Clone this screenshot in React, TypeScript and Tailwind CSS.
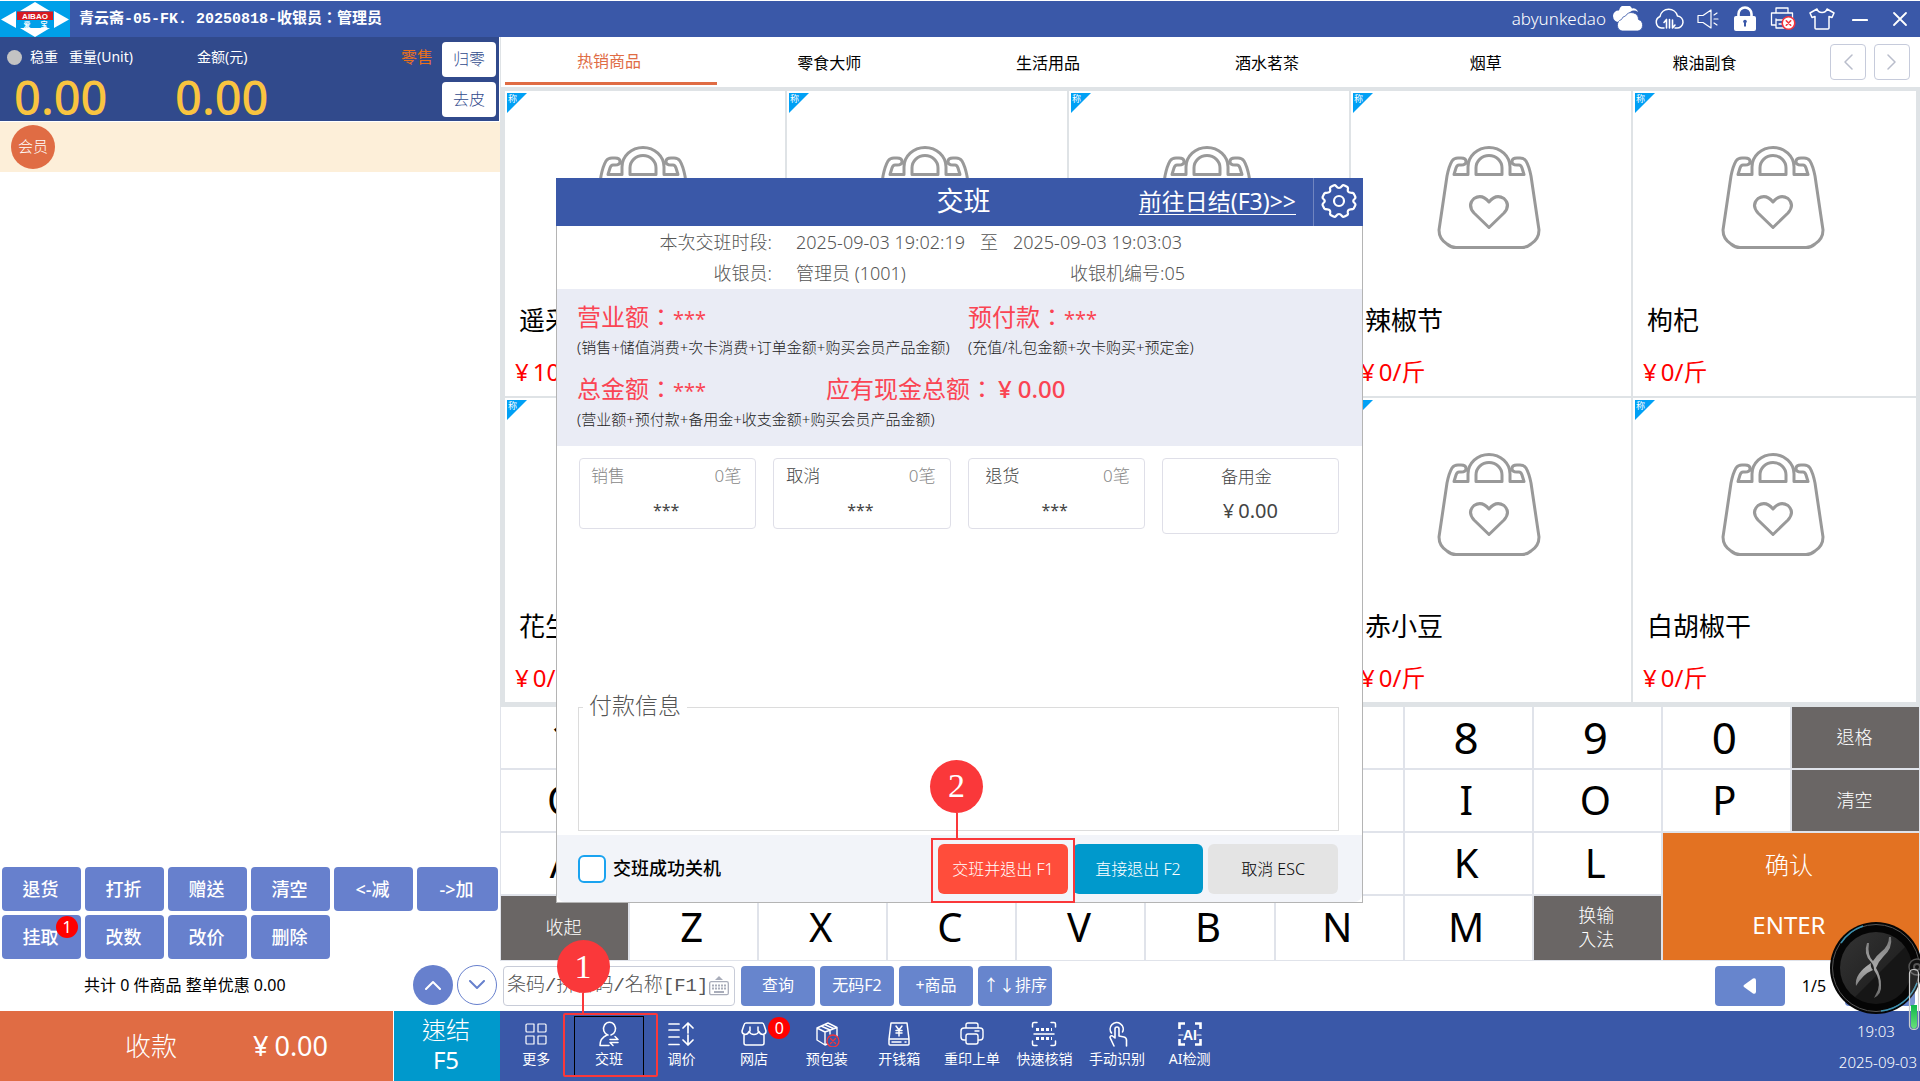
import React from "react";

const products = [
  { name: "遥采", price: "10" },
  { name: "", price: "" },
  { name: "", price: "" },
  { name: "辣椒节", price: "0/斤" },
  { name: "枸杞", price: "0/斤" },
  { name: "花生", price: "0/斤" },
  { name: "", price: "" },
  { name: "", price: "" },
  { name: "赤小豆", price: "0/斤" },
  { name: "白胡椒干", price: "0/斤" },
];

const tabs = ["热销商品", "零食大师", "生活用品", "酒水茗茶", "烟草", "粮油副食"];

function Logo() {
  return (
    <svg width="70" height="36" viewBox="0 0 70 36" className="shrink-0 bg-[#00a0e9]" role="img" aria-label="AIBAO">
      <path d="M35 1 50 10H20zM35 36 20 27H50zM1 18.500 16 10V27zM69 18.500 54 10V27z" fill="#fff" />
      <rect x="17" y="10.500" width="36" height="8.500" fill="#d71920" />
      <text x="35" y="17.500" textAnchor="middle" fontSize="8" fontWeight="700" fill="#fff" fontFamily="Liberation Sans">AIBAO</text>
      <text x="27" y="26" textAnchor="middle" fontSize="7" fontWeight="700" fill="#fff" fontFamily="Noto Sans CJK SC">爱</text>
      <text x="44" y="26" textAnchor="middle" fontSize="7" fontWeight="700" fill="#fff" fontFamily="Noto Sans CJK SC">宝</text>
    </svg>
  );
}

function IconButton({ label, w, children }: { label: string; w: string; children: React.ReactNode }) {
  return (
    <button aria-label={label} className={`flex h-9 items-center justify-center ${w}`}>
      {children}
    </button>
  );
}

const line = { fill: "none", stroke: "#fff", strokeWidth: 1.5, strokeLinecap: "round", strokeLinejoin: "round" } as const;

function TitleBar() {
  return (
    <header className="mt-px flex h-9 items-center bg-[#3a58a8] text-white">
      <Logo />
      <h1 className="ml-[9px] pt-0.5 font-['Liberation_Mono','Noto_Sans_CJK_SC',monospace] text-[15px] font-bold">
        青云斋-05-FK. 20250818-收银员：管理员
      </h1>
      <div className="ml-auto flex items-center">
        <span className="text-[17px] font-light">abyunkedao</span>
        <IconButton label="云端" w="w-11">
          <svg width="32" height="26" viewBox="0 0 32 26" fill="#fff">
            <path d="M8 17a6 6 0 0 1-7-6 5.500 5.500 0 0 1 6-5.500A7 7 0 0 1 20 3.500 5 5 0 0 1 25 5l1 2a7 7 0 0 0-8 0L8 17z" transform="translate(0 -1)" />
            <path d="M10 25a6 6 0 0 1-.5-11.500 5 5 0 0 1 4-3.500 7 7 0 0 1 13 3.500A6 6 0 0 1 26 25z" stroke="#3a58a8" strokeWidth=".8" />
          </svg>
        </IconButton>
        <IconButton label="同步" w="w-[38px]">
          <svg width="30" height="22" viewBox="0 0 30 22" {...line}>
            <path d="M10 20H7.500A6 6 0 0 1 6 8.500 9 9 0 0 1 23.500 8 6 6 0 0 1 22.500 20H21" />
            <path d="M12.500 11.500V20M12.500 11.500l-2.500 3M15.500 11.500V20M18.500 12v8l2.500-3" strokeWidth="1.600" />
          </svg>
        </IconButton>
        <IconButton label="声音" w="w-10">
          <svg width="22" height="20" viewBox="0 0 22 20" {...line} strokeWidth={1.2}>
            <path d="M1 6.500h5L14 1v18l-8-5.500H1zM17 10h4M17 6l3-2M17 14l3 2" />
          </svg>
        </IconButton>
        <IconButton label="锁定" w="w-[34px]">
          <svg width="24" height="26" viewBox="0 0 24 26">
            <rect x="1" y="10" width="22" height="15" rx="2" fill="#fff" />
            <path d="M5.500 11V8a6.500 6.500 0 0 1 13 0v3" fill="none" stroke="#fff" strokeWidth="2.600" />
            <path d="M12 20.500v-4" stroke="#3a58a8" strokeWidth="2" />
            <circle cx="12" cy="15.500" r="1.800" fill="#3a58a8" />
          </svg>
        </IconButton>
        <IconButton label="打印机" w="w-[42px]">
          <svg width="26" height="24" viewBox="0 0 26 24" {...line} strokeWidth={1.3}>
            <path d="M6 6V1h12v5M5 18H1.500V6h21v6M6 12v9h8M6 13h9M9 17h4" />
            <circle cx="18.500" cy="16" r="6.300" fill="#fff" stroke="#f4343c" strokeWidth="1.600" />
            <path d="m16.300 13.800 4.400 4.400M20.700 13.800l-4.400 4.400" stroke="#f4343c" strokeWidth="1.600" />
          </svg>
        </IconButton>
        <IconButton label="换肤" w="w-9">
          <svg width="26" height="22" viewBox="0 0 26 22" {...line}>
            <path d="M8 1 1 5l2 4.500 3-1V20q0 1 1 1h12q1 0 1-1V8.500l3 1L25 5l-7-4q-1 3.500-5 3.500T8 1z" />
          </svg>
        </IconButton>
        <IconButton label="最小化" w="w-10">
          <svg width="16" height="16" viewBox="0 0 16 16" {...line} strokeWidth={2.2}><path d="M1 9h14" /></svg>
        </IconButton>
        <IconButton label="关闭" w="w-10">
          <svg width="16" height="16" viewBox="0 0 16 16" {...line} strokeWidth={1.8}><path d="m2 2 12 12M14 2 2 14" /></svg>
        </IconButton>
      </div>
    </header>
  );
}

function ActionButton({ children, badge }: { children: React.ReactNode; badge?: string }) {
  return (
    <button className="relative h-11 rounded bg-[#6780cd] pr-0.5 text-[18px] font-medium text-white">
      {children}
      {badge && (
        <span className="absolute top-px right-[3px] flex size-[22px] items-center justify-center rounded-full bg-[#ff0000] text-base leading-none font-normal">
          {badge}
        </span>
      )}
    </button>
  );
}

function LeftPanel() {
  return (
    <section className="flex w-[500px] shrink-0 flex-col">
      <div className="mr-px flex h-[84px] bg-[#314a8c] text-white">
        <div className="flex-1 pt-2 pl-[7px]">
          <div className="flex h-6 items-center text-sm">
            <span className="size-[15px] rounded-full bg-[#c3c3c3]" />
            <span className="ml-2">稳重</span>
            <span className="ml-[11px] w-32">重量(Unit)</span>
            <span>金额(元)</span>
            <span className="mr-[9px] ml-auto text-base text-[#e8701c]">零售</span>
          </div>
          <div className="flex pl-[7px] text-[47px] leading-[56px] font-medium text-[#f9c440]">
            <span className="w-[161px]">0.00</span>
            <span>0.00</span>
          </div>
        </div>
        <div className="flex flex-col gap-[5px] pt-[5px] pr-[3px]">
          <button className="h-[35px] w-[54px] rounded bg-white pb-0.5 text-base font-light text-[#314a8c]">归零</button>
          <button className="h-[35px] w-[54px] rounded bg-white pb-0.5 text-base font-light text-[#314a8c]">去皮</button>
        </div>
      </div>
      <div className="mt-px flex h-[50px] items-center bg-[#fdefd9] pl-[11px]">
        <button className="size-11 rounded-full bg-[#e06c44] pb-0.5 text-[15px] font-light text-white">会员</button>
      </div>
      <div className="flex-1" />
      <div className="grid grid-cols-[79fr_79fr_79fr_79fr_79fr_81fr] gap-1 px-0.5">
        <ActionButton>退货</ActionButton>
        <ActionButton>打折</ActionButton>
        <ActionButton>赠送</ActionButton>
        <ActionButton>清空</ActionButton>
        <ActionButton>&lt;-减</ActionButton>
        <ActionButton>-&gt;加</ActionButton>
        <ActionButton badge="1">挂取</ActionButton>
        <ActionButton>改数</ActionButton>
        <ActionButton>改价</ActionButton>
        <ActionButton>删除</ActionButton>
      </div>
      <div className="flex h-[52px] items-center gap-1 pr-[3px] pl-[84px]">
        <p className="flex-1 text-base text-black">共计 0 件商品 整单优惠 0.00</p>
        <button aria-label="上一条" className="flex size-10 items-center justify-center rounded-full bg-[#6780cd]">
          <svg width="18" height="10" viewBox="0 0 18 10" {...line} strokeWidth={2}><path d="m2 9 7-7 7 7" /></svg>
        </button>
        <button aria-label="下一条" className="flex size-10 items-center justify-center rounded-full border border-[#6780cd]">
          <svg width="18" height="10" viewBox="0 0 18 10" {...line} stroke="#6780cd" strokeWidth={2}><path d="m2 1 7 7 7-7" /></svg>
        </button>
      </div>
      <div className="flex h-[70px] gap-px">
        <button className="flex flex-1 items-center justify-center gap-[76px] bg-[#e06c44] pl-[60px] text-[26px] font-light text-white">
          <span>收款</span>
          <span className="flex gap-[6px] text-[27px] font-normal"><span>¥</span>0.00</span>
        </button>
        <button className="flex w-[106px] flex-col items-center justify-center bg-[#0099cc] pr-0.5 pb-0.5 text-2xl leading-[30px] font-light text-white">
          <span>速结</span>
          <span className="font-normal">F5</span>
        </button>
      </div>
    </section>
  );
}

function CategoryTabs() {
  return (
    <nav className="flex h-[50px] items-center border-l border-[#dfe3e6] pr-[10px]">
      <div className="grid flex-1 grid-cols-6 self-stretch">
        {tabs.map((t, i) => (
          <button
            key={t}
            className={
              i === 0
                ? "mr-[3px] mb-0.5 ml-1 border-b-3 border-[#e06c44] pt-0.5 pr-1 text-base text-[#e06c44]"
                : "pt-0.5 text-base text-black"
            }
          >
            {t}
          </button>
        ))}
      </div>
      <div className="ml-4 flex gap-2">
        <button aria-label="上一页分类" className="flex size-9 items-center justify-center rounded border border-[#c6cbdb]">
          <svg width="10" height="16" viewBox="0 0 10 16" {...line} stroke="#b9bdcb"><path d="M9 1 2 8l7 7" /></svg>
        </button>
        <button aria-label="下一页分类" className="flex size-9 items-center justify-center rounded border border-[#c6cbdb]">
          <svg width="10" height="16" viewBox="0 0 10 16" {...line} stroke="#b9bdcb"><path d="m1 1 7 7-7 7" /></svg>
        </button>
      </div>
    </nav>
  );
}

function Bag() {
  return (
    <svg width="104" height="104" viewBox="0 0 104 104" fill="none" stroke="#999" strokeWidth="3" strokeLinejoin="round" className="mr-1">
      <path d="M10 30 2 84q0 9 8 14 4 3.500 9 3.500h66q5 0 9-3.500 8-5 8-14L94 30q-2-10-5-15-2-3-6-3h-3q-5 0-5 3.500t5 3.500h2q2 0 3 3l2 6.500H73V21a21 19.500 0 0 0-42 0v7.500H17l2-6.500q1-3 3-3h2q5 0 5-3.500T24 12h-3q-4 0-6 3-3 5-5 15z" />
      <path d="M39 28.500V22a13 12.500 0 0 1 26 0v6.500z" />
      <path d="M52 81.500 37 67q-7-8 0-14.500 8-5 15 3.500 7-8.500 15-3.500 7 6.500 0 14.500z" />
    </svg>
  );
}

function ProductCard({ name, price }: { name: string; price: string }) {
  return (
    <article className="relative flex min-w-0 flex-col bg-white">
      <svg width="20" height="20" viewBox="0 0 20 20" className="absolute top-0.5 left-0.5 overflow-visible">
        <path d="M0 0H20L0 20z" fill="#00a0f5" />
        <text x="1" y="9" fontSize="9" fill="#fff" fontFamily="Noto Sans CJK SC">称</text>
      </svg>
      <div className="flex justify-center pt-[55px]"><Bag /></div>
      <div className="flex flex-1 flex-col justify-end gap-4 pb-[6px]">
        <h2 className="h-9 pl-[14px] text-[26px] leading-9 text-black">{name}</h2>
        <p className="flex h-9 gap-1 pl-[10px] text-2xl leading-9 text-[#ff0000]">
          {price && <span>¥</span>}
          {price}
        </p>
      </div>
    </article>
  );
}

function Keypad() {
  const key = "bg-white pr-1 pb-0.5 text-[40px] leading-none text-black";
  const dark = "bg-[#6a6665] pr-0.5 pb-0.5 text-lg leading-6 font-light text-white";
  return (
    <div className="grid grid-cols-11 grid-rows-[61px_61px_61px_64px] gap-0.5 bg-[#e0e3ea] px-px pb-px">
      {"1234567890".split("").map((k) => (
        <button key={k} className="bg-white pr-1 pb-0.5 text-[44px] leading-none text-black">{k}</button>
      ))}
      <button className={dark}>退格</button>
      {"QWERTYUIOP".split("").map((k) => <button key={k} className={key}>{k}</button>)}
      <button className={dark}>清空</button>
      {"ASDFGHJKL".split("").map((k) => <button key={k} className={key}>{k}</button>)}
      <button className="col-span-2 row-span-2 flex flex-col items-center justify-center gap-7 bg-[#e37222] pr-1 pb-1 text-2xl leading-8 font-light text-white">
        <span>确认</span>
        <span className="font-normal">ENTER</span>
      </button>
      <button className={dark}>收起</button>
      {"ZXCVBNM".split("").map((k) => <button key={k} className={key}>{k}</button>)}
      <button className={dark}>换输<br />入法</button>
    </div>
  );
}

function FloatingBall() {
  return (
    <svg width="94" height="110" viewBox="0 0 94 110" className="absolute right-[-3px] bottom-[-20px]" aria-hidden="true">
      <defs>
        <linearGradient id="x" x1="0" y1="0" x2="0" y2="1">
          <stop offset="0" stopColor="#777" /><stop offset=".5" stopColor="#aaa" /><stop offset="1" stopColor="#666" />
        </linearGradient>
        <linearGradient id="face" x1="0" y1="0" x2="1" y2="1">
          <stop offset="0" stopColor="#343434" /><stop offset=".55" stopColor="#242424" /><stop offset=".56" stopColor="#161616" />
        </linearGradient>
        <linearGradient id="bar" x1="0" y1="0" x2="0" y2="1">
          <stop offset="0" stopColor="#0fb84c" /><stop offset="1" stopColor="#6be07a" />
        </linearGradient>
      </defs>
      <circle cx="47" cy="47" r="46" fill="#050505" />
      <circle cx="47" cy="47" r="43.500" fill="none" stroke="#555" />
      <path d="M12 22A43.500 43.500 0 0 1 34 5M88 62A43.500 43.500 0 0 1 52 90" fill="none" stroke="#3a8fae" strokeWidth="1.500" />
      <circle cx="47" cy="47" r="36" fill="url(#face)" />
      <path d="M38 22q-4 11 4 19 3 3 3 8 7 10 4 20l-4 8q8-4 7-13 0-9-5-17 2-6 7-11 10-9 8-20h-2q0 9-8 15-5 4-8 9-6-6-4-18zM42 42q-1 4 2 7-10 4-17 16-2-12 15-23z" fill="url(#x)" />
      <circle cx="88" cy="46" r="8" fill="#111" stroke="#555" strokeWidth="1.500" />
      <circle cx="88" cy="46" r="3" fill="none" stroke="#555" strokeWidth="2" />
      <rect x="80.500" y="48.500" width="9" height="60" rx="4" fill="#ffffff22" stroke="#ccc" strokeWidth="1.200" />
      <path d="M82 84h6v21q-1 3-3 3t-3-3z" fill="url(#bar)" />
    </svg>
  );
}

function SearchRow() {
  const btn = "h-10 w-[74px] rounded bg-[#6785cd] pb-0.5 text-base text-white";
  return (
    <div className="relative flex h-[50px] items-center gap-[5px] pl-[3px]">
      <div className="relative mr-px w-[232px]">
        <input
          aria-label="商品搜索"
          placeholder="条码/拼音码/名称[F1]"
          className="h-10 w-full rounded border border-[#c8ccd8] pl-[3px] font-['Liberation_Mono','Noto_Sans_CJK_SC',monospace] text-[19px] font-light text-black placeholder:text-[#555]"
        />
        <svg width="20" height="20" viewBox="0 0 20 20" className="absolute top-[10px] right-[6px]" fill="none" stroke="#a9adba" strokeWidth="1.300">
          <rect x=".7" y="5.700" width="18.600" height="13" rx="1.500" />
          <path d="M3 9.500h14M3 12.500h14" strokeWidth="2" strokeDasharray="2 1" />
          <path d="M5 16h10" strokeWidth="2" />
          <path d="m6 4 4-4 4 4z" fill="#a9adba" stroke="none" />
        </svg>
      </div>
      <button className={btn}>查询</button>
      <button className={btn}>无码F2</button>
      <button className={btn}>+商品</button>
      <button className={btn}>↑↓排序</button>
      <div className="ml-auto flex items-center pr-[5px]">
        <button aria-label="上一页" className="flex h-10 w-[70px] items-center justify-center rounded bg-[#6785cd]">
          <svg width="14" height="16" viewBox="0 0 14 16" fill="#fff"><path d="M1 7 10 .500q3-1 3 2v11q0 3-3 2L1 9q-1-1 0-2z" /></svg>
        </button>
        <span className="w-[60px] pr-0.5 text-center text-base">1/5</span>
        <button aria-label="下一页" className="flex h-10 w-[70px] items-center justify-center rounded bg-[#6785cd]">
          <svg width="14" height="16" viewBox="0 0 14 16" fill="#fff"><path d="M13 7 4 .500q-3-1-3 2v11q0 3 3 2L13 9q1-1 0-2z" /></svg>
        </button>
      </div>
      <FloatingBall />
    </div>
  );
}

const errorMark = (
  <g stroke="#f4343c" strokeWidth="1.300">
    <circle cx="19" cy="20" r="6" fill="#3a58a8" />
    <path d="m16.500 17.500 5 5M21.500 17.500l-5 5" />
  </g>
);

const navItems: { label: string; icon: React.ReactNode; badge?: string; active?: boolean }[] = [
  { label: "更多", icon: <path d="M4 3h7v8H4q-1 0-1-1V4q0-1 1-1zM15 3h7q1 0 1 1v6q0 1-1 1h-7zM3 15h8v8H4q-1 0-1-1zM15 15h8v7q0 1-1 1h-7z" strokeWidth="1.200" /> },
  {
    label: "交班",
    active: true,
    icon: <path d="M12 14a6 6.500 0 1 1 3 0M11 14q-7 3-7 10.500h9M14 18.500h8l-3-3M22 21.500h-8l3 3" />,
  },
  { label: "调价", icon: <path d="M1 3h10M1 9h10M1 16h10M1 23.500h10M20 12V2m-5 5 5-5 5 5M20 14v10m-5-5 5 5 5-5" strokeWidth="1.700" /> },
  {
    label: "网店",
    badge: "0",
    icon: <path d="M5 2h16q1.500 0 2 2l2 6q0 3-3 3.500-3 0-4-3-1.500 3-5 3t-5-3q-1 3-4 3-3-.500-3-3.500l2-6q.500-2 2-2zM9 6v4M17 6v4M3 14v8q0 2 2 2h16q2 0 2-2v-8" />,
  },
  {
    label: "预包装",
    icon: <><path d="M3 7 14 2l9 4.500V19l-12 5-8-5zM3 7l8 4v13M11 11l12-4.500M7 5l9 4v4M10.500 3.500l9 4" strokeWidth="1.400" />{errorMark}</>,
  },
  {
    label: "开钱箱",
    icon: <path d="M5 2h16l2 16v5q0 1-1 1H4q-1 0-1-1v-5zM3 18h20M6 21h9M19 21h1M10 5l3 4 3-4M13 9v6M10 9.500h6M10 12h6" />,
  },
  {
    label: "重印上单",
    icon: <path d="M7 7V4q0-2 2-2h8q2 0 2 2v3M7 19H5q-3 0-3-3v-6q0-3 3-3h16q3 0 3 3v6q0 3-3 3h-2M16 10h4M9 13h8q2 0 2 2v6q0 2-2 2H9q-2 0-2-2v-6q0-2 2-2z" strokeWidth="1.400" />,
  },
  {
    label: "快速核销",
    icon: <><path d="M1.500 6V3q0-1.500 1.500-1.500h3M20 1.500h3q1.500 0 1.500 1.500v3M24.500 20v3q0 1.500-1.500 1.500h-3M6 24.500H3q-1.500 0-1.500-1.500v-3M3 13h20" /><path d="M5 8.500h16M5 17.500h16" strokeWidth="3" strokeDasharray="3 2" strokeLinecap="butt" /></>,
  },
  {
    label: "手动识别",
    icon: <path d="M7.500 12a6.500 6.500 0 1 1 11-1M11 17V8a2 2 0 0 1 4 0v7l5 1q2.500.700 2.500 3v6M11 17l-2.500-2q-2-1-2.500 1.500l4 8.500" strokeWidth="1.600" />,
  },
  {
    label: "AI检测",
    icon: (
      <>
        <path d="M2.500 8V2.500H8M18 2.500h5.500V8M23.500 18v5.500H18M8 23.500H2.500V18" strokeWidth="2.600" strokeLinecap="butt" strokeLinejoin="miter" />
        <path d="M2 14h4M20 14h4" strokeWidth="1.200" />
        <text x="13" y="19" textAnchor="middle" fontSize="14" fontWeight="700" fill="#fff" stroke="none" fontFamily="Liberation Sans">AI</text>
      </>
    ),
  },
];

function Callout({ n, stem }: { n: string; stem: string }) {
  return (
    <span className="flex flex-col items-center">
      <span className="flex size-[53px] items-center justify-center rounded-full bg-[#fa383a] font-['Liberation_Serif',serif] text-[34px] leading-none font-normal text-white">
        {n}
      </span>
      <span className={`w-0.5 bg-[#fa383a] ${stem}`} />
    </span>
  );
}

function BottomNav() {
  return (
    <footer className="flex h-[70px] items-stretch justify-between bg-[#3a58a8] text-white">
      <div className="grid w-[726px] grid-cols-10">
        {navItems.map((it) => (
          <button key={it.label} className="relative flex flex-col items-center pt-[10px] text-sm leading-5 whitespace-nowrap">
            <svg width="26" height="26" viewBox="0 0 26 26" {...line}>{it.icon}</svg>
            <span className="mt-0.5">{it.label}</span>
            {it.badge && (
              <span className="absolute top-[6px] right-0 flex size-[22px] items-center justify-center rounded-full bg-[#ff0000] text-base leading-none">
                {it.badge}
              </span>
            )}
            {it.active && (
              <>
                <span className="absolute inset-x-px top-[5px] bottom-[5px] border border-black" />
                <span className="absolute -right-[13px] -left-[10px] top-0.5 bottom-1 rounded-xs border-2 border-[#fa383a]" />
                <span className="absolute bottom-[68px] left-[-16px] z-20"><Callout n="1" stem="h-5" /></span>
              </>
            )}
          </button>
        ))}
      </div>
      <div className="flex flex-col justify-between pt-[10px] pr-[3px] pb-[9px] text-center text-[15px] leading-5 font-light">
        <time className="pr-1">19:03</time>
        <time>2025-09-03</time>
      </div>
    </footer>
  );
}

function StatCard({ title, tone, pad }: { title: string; tone: string; pad: string }) {
  return (
    <div className="h-[71px] rounded border border-[#dfdfe8] pt-[3px]">
      <div className={`flex justify-between pr-[14px] text-[17px] leading-7 font-light ${pad}`}>
        <span className={tone}>{title}</span>
        <span className="text-[#888]">0笔</span>
      </div>
      <p className="mt-2 pr-[3px] text-center text-base leading-6 text-[#444]">***</p>
    </div>
  );
}

function Masked() {
  return <span className="text-xl leading-none">***</span>;
}

function ShiftDialog() {
  return (
    <div className="pointer-events-none fixed inset-0 flex items-center justify-center">
      <section role="dialog" aria-label="交班" className="pointer-events-auto mr-px w-[807px] bg-white">
        <header className="grid h-12 grid-cols-[1fr_auto_1fr] items-center bg-[#3a58a8] text-white">
          <span />
          <h2 className="pl-2 pb-[3px] text-[27px] leading-none">交班</h2>
          <div className="flex h-full items-center justify-end">
            <a href="#daily" className="mr-[17px] pb-0.5 text-[23px] leading-7 underline decoration-1 underline-offset-4">前往日结(F3)&gt;&gt;</a>
            <button aria-label="设置" className="flex h-full w-[50px] items-center justify-center border-l border-[#7085c0] pb-0.5">
              <svg width="36" height="36" viewBox="-18 -18 36 36" {...line} strokeWidth={2.2}>
                <path d="M-5.500-15.500q1.500-.8 2.500.5 3 4 6 0 1-1.300 2.500-.5l2.500 1.300q1.300.7.900 2.200-.7 3.500 2.600 3.700 2.500 0 3.200.8l1.500 3q.600 1.300-.500 2.300-3 2.200 0 4.400 1.100 1 .500 2.300l-1.500 3q-.7.8-3.200.8-3.300.2-2.600 3.700.4 1.500-.9 2.200l-2.500 1.300q-1.500.8-2.500-.5-3-4-6 0-1 1.300-2.500.5l-2.500-1.300q-1.300-.7-.9-2.200.7-3.500-2.600-3.700-2.500 0-3.200-.8l-1.500-3q-.6-1.300.5-2.300 3-2.200 0-4.400-1.100-1-.5-2.300l1.500-3q.7-.8 3.200-.8 3.300-.2 2.600-3.700-.4-1.500.9-2.200z" />
                <circle r="5" />
              </svg>
            </button>
          </div>
        </header>
        <div className="border-x border-b border-[#b4b4b4]">
          <div className="grid h-[63px] grid-cols-[215px_200px_17px_1fr] content-center gap-y-1 whitespace-nowrap text-[18px] leading-[27px] font-light text-[#555]">
            <span className="text-right">本次交班时段:</span>
            <span className="pl-6">2025-09-03 19:02:19</span>
            <span className="pl-2">至</span>
            <span className="pl-6">2025-09-03 19:03:03</span>
            <span className="text-right">收银员:</span>
            <span className="pl-6">管理员 (1001)</span>
            <span />
            <span className="pl-[81px]">收银机编号:05</span>
          </div>
          <div className="h-[157px] bg-[#eaecf5] pt-3 pl-5 whitespace-nowrap text-[#fa4453]">
            <div className="flex">
              <div className="w-[391px]">
                <p className="text-2xl leading-8">营业额：<Masked /></p>
                <p className="text-[15px] leading-7 font-light text-[#222]">(销售+储值消费+次卡消费+订单金额+购买会员产品金额)</p>
              </div>
              <div>
                <p className="text-2xl leading-8">预付款：<Masked /></p>
                <p className="text-[15px] leading-7 font-light text-[#222]">(充值/礼包金额+次卡购买+预定金)</p>
              </div>
            </div>
            <div className="mt-3 flex text-2xl leading-8">
              <p className="w-[249px]">总金额：<Masked /></p>
              <p className="flex">应有现金总额：<span className="ml-1 flex gap-[6px] font-medium"><span>¥</span>0.00</span></p>
            </div>
            <p className="text-[15px] leading-7 font-light text-[#222]">(营业额+预付款+备用金+收支金额+购买会员产品金额)</p>
          </div>
          <div className="mr-[23px] ml-[22px] mt-3 grid grid-cols-4 items-start gap-[17px]">
            <StatCard title="销售" tone="text-[#888]" pad="pl-[11px]" />
            <StatCard title="取消" tone="text-[#444]" pad="pl-3" />
            <StatCard title="退货" tone="text-[#444]" pad="pl-[17px]" />
            <div className="h-[76px] rounded border border-[#dfdfe8] pt-1 text-center">
              <p className="pr-2 text-[17px] leading-7 font-light text-[#444]">备用金</p>
              <p className="mt-2 flex justify-center gap-1 text-xl leading-6 text-[#444]"><span>¥</span>0.00</p>
            </div>
          </div>
          <fieldset className="mr-[23px] ml-[21px] mt-[158px] h-[139px] border border-[#dcdcdc] px-1 pb-0">
            <legend className="px-[6px] pb-1 text-[23px] leading-[26px] font-light text-[#555]">付款信息</legend>
          </fieldset>
          <div className="mt-1 flex h-[67px] items-center rounded-b-lg bg-[#f2f4f9] pr-6 pl-[21px]">
            <label className="flex items-center gap-[7px] text-[18px] font-medium text-black">
              <input type="checkbox" className="size-7 appearance-none rounded-md border-2 border-[#1aa3f0] bg-white" />
              交班成功关机
            </label>
            <div className="ml-auto flex gap-[5px] text-base font-light">
              <div className="relative">
                <button className="h-[50px] w-[130px] rounded-md bg-[#ff4d3b] text-white">交班并退出 F1</button>
                <span className="absolute -inset-x-[7px] -top-[6px] -bottom-[9px] border-2 border-[#fa383a]" />
                <span className="absolute bottom-[55px] left-[-8px]"><Callout n="2" stem="h-[26px]" /></span>
              </div>
              <button className="h-[50px] w-[130px] rounded-md bg-[#0099cc] text-white">直接退出 F2</button>
              <button className="h-[50px] w-[130px] rounded-md bg-[#e4e4e4] text-black">取消 ESC</button>
            </div>
          </div>
        </div>
      </section>
    </div>
  );
}

export default function App() {
  return (
    <div className="flex min-h-screen flex-col overflow-hidden bg-white font-['Noto_Sans','Noto_Sans_CJK_TC',sans-serif]" lang="zh-Hant">
      <TitleBar />
      <main className="flex flex-1">
        <LeftPanel />
        <section className="flex min-w-0 flex-1 flex-col">
          <CategoryTabs />
          <div className="grid flex-1 grid-cols-[280fr_280fr_280fr_280fr_283fr] grid-rows-2 gap-0.5 bg-[#dfe3e6] pt-1 pr-1 pb-[5px] pl-[5px]">
            {products.map((p, i) => <ProductCard key={i} {...p} />)}
          </div>
          <Keypad />
          <SearchRow />
          <BottomNav />
        </section>
      </main>
      <ShiftDialog />
    </div>
  );
}
